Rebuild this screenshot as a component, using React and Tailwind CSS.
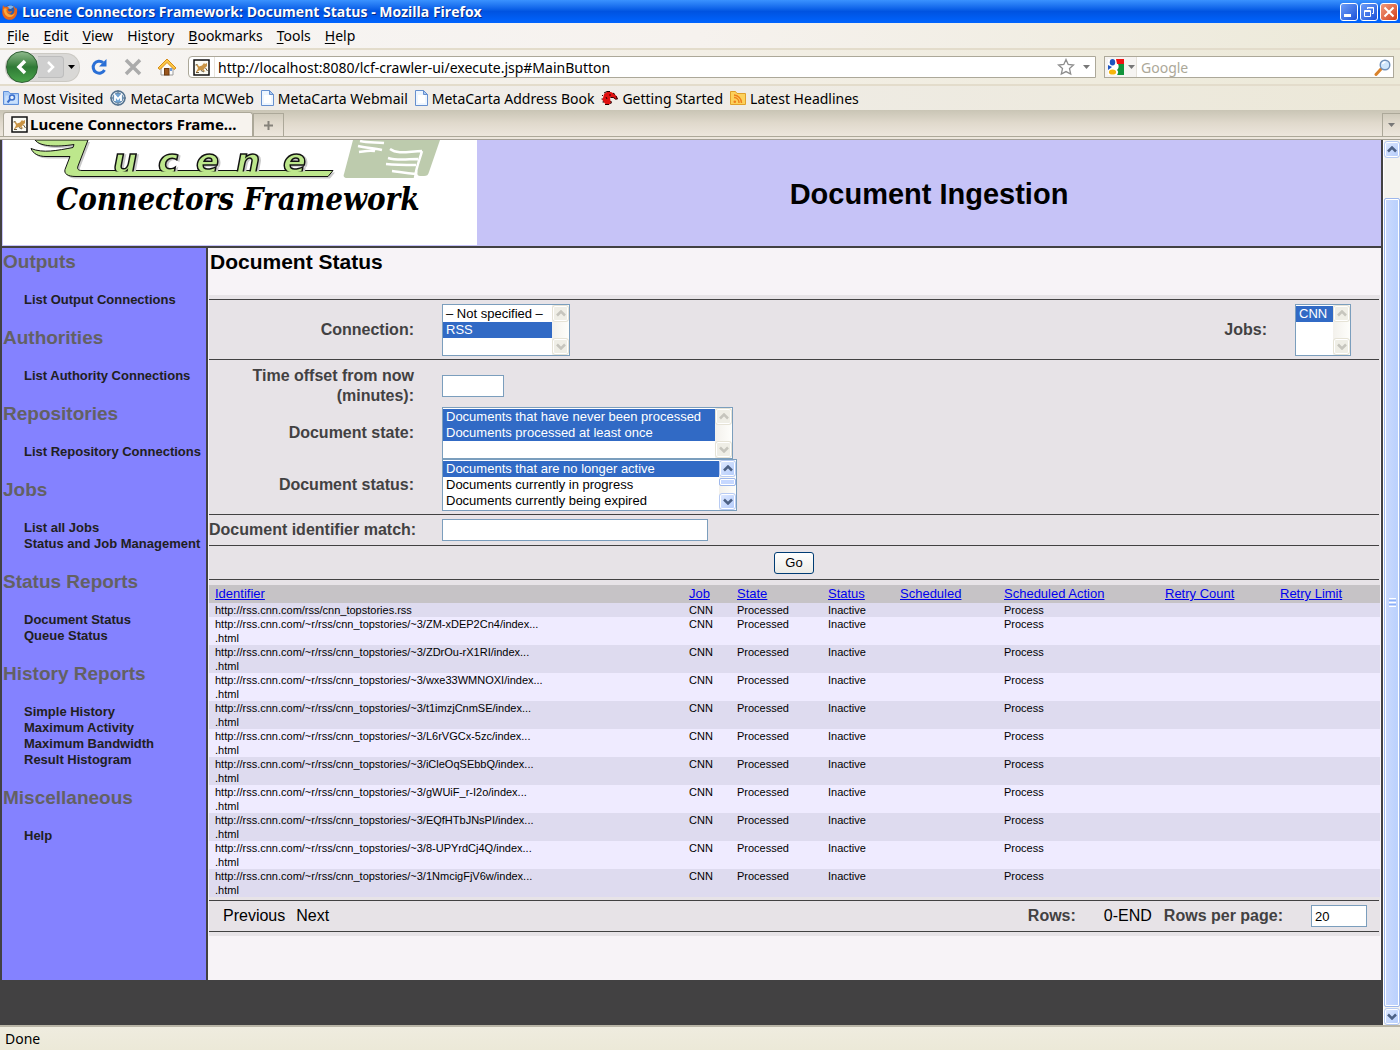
import React from "react";

const UI = "font-['Noto_Sans','DejaVu_Sans',sans-serif]";

/* ---------- icons ---------- */

function FirefoxIcon() {
  return (
    <svg width="16" height="16" viewBox="0 0 16 16" aria-hidden="true">
      <circle cx="8" cy="7.500" r="6.500" fill="#2b5fae" />
      <path d="M5 3c2-2 5-2 7 0-1 0-2 1-3 2-2 0-3-1-4-2z" fill="#7db4ee" />
      <path d="M1 1c.6 1 1.200 2 2 2C5 2.500 6.500 3 7.500 4.500 5.500 5 5.500 6 6.500 7c1 .8 2.500.5 3.500 0 0 2-2 3-4 2.500C8 12 12 11 12.500 6c-.3-1.500-.5-2.500-1.500-4 1.500.5 2.500 1.500 3 3l.5-1.500C16.500 8 14 15.800 8 15.800 3 15.800 0 12 .3 7 .5 5 .5 3 1 1z" fill="#e8661a" />
      <path d="M1.500 5c1-1 2.500-1 3.500 0-1.500 2 0 5 3 5.500 2 1 4 0 5-2-.5 3-3 5-6 4.500C4 12.500 2 10 1.500 5z" fill="#f9a93b" />
    </svg>
  );
}

function CatIcon() {
  return (
    <svg width="17" height="17" viewBox="0 0 17 17" aria-hidden="true">
      <rect x="1" y="1" width="15" height="15" fill="#fbfbf4" stroke="#111" strokeWidth="1.500" />
      <path d="M3 5.500L5 6l1 1.500 3-1L11 4l1 1 2-1v3l-2 2-1.500 1.500 2 2H11L9 11l-3 .5-2 1.500H3l1.500-2.500L5 9z" fill="#c99445" />
      <path d="M2.500 6l2-.5M3 13.500h3M8 11.500l3 1.500M12.500 9l2 3" stroke="#6a5a3c" fill="none" />
    </svg>
  );
}

function ReloadIcon() {
  return (
    <svg width="18" height="18" viewBox="0 0 18 18" aria-hidden="true">
      <path d="M13 4.500A6 6 0 1 0 14.500 12" fill="none" stroke="#2a6fd6" strokeWidth="3" />
      <path d="M16.500 1v7.500H9z" fill="#2a6fd6" />
    </svg>
  );
}

function StopIcon() {
  return (
    <svg width="18" height="18" viewBox="0 0 18 18" aria-hidden="true">
      <path d="M2 2l14 14M16 2L2 16" stroke="#ababab" strokeWidth="3.500" />
    </svg>
  );
}

function HomeIcon() {
  return (
    <svg width="20" height="18" viewBox="0 0 20 18" aria-hidden="true">
      <path d="M4 9l6-6 6 6v8H4z" fill="#fbfbfb" stroke="#9a9a9a" />
      <path d="M10 1L1 10l2 1.500 7-7 7 7L19 10z" fill="#fcc845" stroke="#d58b16" strokeLinejoin="round" />
      <rect x="7.500" y="10.500" width="4.500" height="6.500" fill="#99561e" stroke="#6d3a10" />
      <rect x="13" y="10" width="2" height="3" fill="#6f9bdc" />
    </svg>
  );
}

function MostVisitedIcon() {
  return (
    <svg width="16" height="14" viewBox="0 0 16 14" aria-hidden="true">
      <path d="M.5 13.500V.5h5l1.500 2h8.500v11z" fill="#a9cbf7" stroke="#5f8fd8" />
      <path d="M1.500 12.500l1-8h12v8z" fill="#c9e0fc" />
      <circle cx="9" cy="6.500" r="2.500" fill="#e6f1ff" stroke="#3b6ecb" strokeWidth="1.500" />
      <path d="M7 8.500L4.500 11.500" stroke="#3b6ecb" strokeWidth="2" />
    </svg>
  );
}

function MetaCartaIcon() {
  return (
    <svg width="16" height="16" viewBox="0 0 16 16" aria-hidden="true">
      <circle cx="8" cy="8" r="7" fill="#dce8f2" stroke="#54728f" strokeWidth="1.500" />
      <circle cx="8" cy="8" r="5" fill="#6fa3d4" stroke="#54728f" strokeWidth=".8" />
      <path d="M5 11V5.500l3 3.500 3-3.500V11" fill="none" stroke="#fff" strokeWidth="1.800" />
      <path d="M8 0v3M0 8h3M13 8h3M8 13v3" stroke="#54728f" />
    </svg>
  );
}

function PageIcon() {
  return (
    <svg width="13" height="16" viewBox="0 0 13 16" aria-hidden="true">
      <path d="M.5.5h8l4 4v11H.5z" fill="#eef6ff" stroke="#6690cf" />
      <path d="M3 5h7v8H3z" fill="#fff" />
      <path d="M8.500.5v4h4z" fill="#a9c8f2" stroke="#6690cf" />
    </svg>
  );
}

function DinoIcon() {
  return (
    <svg width="17" height="15" viewBox="0 0 17 15" aria-hidden="true">
      <path d="M3 3l3-2h4l3 1.500 3 3 .5 2.500-2 .5-3-2H9l.5 3.500 1 1-2 2.500H5L2.500 11 1 8l1-1z" fill="#e01010" />
      <path d="M3 2l3-1.500h3M1 5l1-1M.5 8h1M1.500 11h1.500M4 13.500h4M9.500 10l1 1-1 2M12 2l2 1.500M15 5l1.500 3h-2l-2-1.500H9.500M8 4h2M5 6l1 2" stroke="#240202" strokeWidth="1" fill="none" />
    </svg>
  );
}

function FeedFolderIcon() {
  return (
    <svg width="16" height="14" viewBox="0 0 16 14" aria-hidden="true">
      <path d="M.5 13.500V.5h5l1.500 2h8.500v11z" fill="#fcd15b" stroke="#e0a02a" />
      <path d="M4 6.500a5 5 0 0 1 5 5.500M4 4A8 8 0 0 1 11.500 12" fill="none" stroke="#ee7f1c" strokeWidth="1.400" />
      <circle cx="4.800" cy="10.800" r="1.300" fill="#ee7f1c" />
    </svg>
  );
}

function StarIcon() {
  return (
    <svg width="18" height="18" viewBox="0 0 18 18" aria-hidden="true">
      <path d="M9 1.500l2.200 4.900 5.300.6-4 3.600 1.200 5.400L9 13.600 4.300 16l1.200-5.400-4-3.600 5.300-.6z" fill="#fff" stroke="#8d8d8d" strokeWidth="1.300" />
    </svg>
  );
}

function GoogleIcon() {
  return (
    <svg width="16" height="16" viewBox="0 0 16 16" aria-hidden="true">
      <rect width="16" height="16" fill="#fff" />
      <path d="M8 0h8v5H9z" fill="#f01313" />
      <path d="M10 5h6v11H9c2-3 1-4 0-5 2-2 2-4 1-6z" fill="#11933b" />
      <path d="M0 6l4 2-4 3z" fill="#1d53c0" />
      <ellipse cx="4.500" cy="3.300" rx="2.700" ry="3.200" fill="#1d53c0" />
      <ellipse cx="4.500" cy="13" rx="3.600" ry="2.600" fill="#f5b50b" />
    </svg>
  );
}

function MagnifierIcon() {
  return (
    <svg width="17" height="17" viewBox="0 0 17 17" aria-hidden="true">
      <path d="M7 10L2 15.500" stroke="#d9822b" strokeWidth="3" strokeLinecap="round" />
      <circle cx="11" cy="6" r="4.800" fill="#cfe6fb" stroke="#6e8fb8" strokeWidth="1.400" />
      <path d="M8.500 5a3 3 0 0 1 3-2" stroke="#fff" fill="none" strokeWidth="1.400" />
    </svg>
  );
}

function DownTriangle({ className }) {
  return (
    <svg width="7" height="4" viewBox="0 0 7 4" className={className} aria-hidden="true">
      <path d="M0 0h7L3.500 4z" fill="currentColor" />
    </svg>
  );
}

function Chevron({ up }) {
  return (
    <svg width="10" height="7" viewBox="0 0 10 7" aria-hidden="true">
      <path d={up ? "M1 5.500l4-4 4 4" : "M1 1.500l4 4 4-4"} fill="none" stroke="currentColor" strokeWidth="2.500" />
    </svg>
  );
}

/* ---------- scroll bars ---------- */

function ScrollButton({ up, active, label }) {
  return (
    <button
      type="button"
      aria-label={label}
      className={
        "flex h-[17px] w-full shrink-0 items-center justify-center rounded-[3px] border " +
        (active
          ? "border-[#b8cbf3] bg-linear-to-br from-[#dfe9ff] to-[#b3cbfb] text-[#4d6185] shadow-[inset_0_0_0_1px_white]"
          : "border-[#e6e3d6] bg-[#efeee6] text-[#c6c5bd] shadow-[inset_0_0_0_1px_white]")
      }
    >
      <Chevron up={up} />
    </button>
  );
}

function ListBox({ id, width, options, selected, active }) {
  return (
    <div className={"flex h-[52px] shrink-0 border border-[#7b9ebd] bg-white " + width}>
      <select
        id={id}
        multiple
        size={3}
        defaultValue={selected}
        className="h-[50px] min-w-0 flex-1 overflow-hidden bg-white pt-px text-[13px] leading-4 text-black outline-none [scrollbar-width:none]"
      >
        {options.map((o) => (
          <option key={o} value={o} className="h-4 min-h-4 py-0 pr-0 pl-[3px] leading-4 checked:bg-[#316ac5] checked:text-white">
            {o}
          </option>
        ))}
      </select>
      <div className="flex w-[17px] shrink-0 flex-col bg-linear-to-r from-[#f3f1ec] to-[#fefefb]">
        <ScrollButton up active={active} label="Scroll up" />
        <div className="flex-1">
          {active && <div className="mt-px h-2 rounded-[2px] border border-[#9db7ec] bg-[#c6d8ff] shadow-[inset_0_0_0_1px_white]" />}
        </div>
        <ScrollButton active={active} label="Scroll down" />
      </div>
    </div>
  );
}

/* ---------- browser chrome ---------- */

function TitleBar() {
  return (
    <header className="flex h-[23px] items-center bg-linear-to-b from-[#3a92ff] via-[#0053e1] to-[#0064ff] px-[2px]">
      <FirefoxIcon />
      <h1 className="ml-1 flex-1 truncate font-['Open_Sans',sans-serif] text-[14px] leading-[22px] font-bold text-white [text-shadow:1px_1px_0_#0a2a86]">
        Lucene Connectors Framework: Document Status - Mozilla Firefox
      </h1>
      <div className="flex gap-[2px]">
        <button type="button" aria-label="Minimize" className="flex size-[18px] items-end rounded-[3px] border border-white bg-linear-to-br from-[#6d9cf7] to-[#1c50d8] p-[3px]">
          <span className="h-[3px] w-[7px] bg-white" />
        </button>
        <button type="button" aria-label="Restore" className="flex size-[18px] items-center justify-center rounded-[3px] border border-white bg-linear-to-br from-[#6d9cf7] to-[#1c50d8]">
          <svg width="12" height="12" viewBox="0 0 12 12" fill="none" stroke="#fff" aria-hidden="true">
            <path d="M4.500 3V1.500h6v6H9M4 2h7" />
            <path d="M1.500 4.500h6v6h-6zM1 5.500h7" />
          </svg>
        </button>
        <button type="button" aria-label="Close" className="flex size-[18px] items-center justify-center rounded-[3px] border border-white bg-linear-to-br from-[#f09a7c] to-[#d13a12]">
          <svg width="12" height="12" viewBox="0 0 12 12" aria-hidden="true">
            <path d="M1.500 1.500l9 9M10.500 1.500l-9 9" stroke="#fff" strokeWidth="2" />
          </svg>
        </button>
      </div>
    </header>
  );
}

const MENUS = [
  ["", "F", "ile"],
  ["", "E", "dit"],
  ["", "V", "iew"],
  ["Hi", "s", "tory"],
  ["", "B", "ookmarks"],
  ["", "T", "ools"],
  ["", "H", "elp"],
];

function MenuBar() {
  return (
    <nav aria-label="Menu" className="flex h-[27px] items-center gap-[14px] border-b-2 border-[#e3dccb] bg-linear-to-r from-[#f7f5f4] via-[#f6f2ee] to-[#ece9d8] px-[7px] text-[14px]">
      {MENUS.map(([a, b, c]) => (
        <button type="button" key={a + b + c}>
          {a}
          <span className="underline underline-offset-2">{b}</span>
          {c}
        </button>
      ))}
    </nav>
  );
}

function NavBar() {
  return (
    <div className="flex h-[36px] items-center border-b-2 border-[#e3dccb] bg-linear-to-r from-[#f7f5f4] via-[#f3efe6] to-[#ece9d8] px-[6px]">
      <div className="flex h-[27px] items-center rounded-[13px] bg-[#d9d8d6] shadow-[0_0_0_1px_#cbc9c3]">
        <button type="button" aria-label="Back" className="flex size-[32px] items-center justify-center rounded-full border border-[#2f5f33] bg-linear-to-b from-[#8cb98b] via-[#2e7a35] to-[#49a34a]">
          <svg width="14" height="16" viewBox="0 0 14 16" aria-hidden="true">
            <path d="M10 2L4 8l6 6" fill="none" stroke="#fff" strokeWidth="3.500" />
          </svg>
        </button>
        <button type="button" aria-label="Forward" className="flex h-[22px] w-[26px] items-center justify-center rounded-r-[4px] border border-l-0 border-[#bdbdbd] bg-[#cfcfcf]">
          <svg width="12" height="12" viewBox="0 0 12 12" aria-hidden="true">
            <path d="M3 1l5 5-5 5" fill="none" stroke="#fff" strokeWidth="2.500" />
          </svg>
        </button>
        <button type="button" aria-label="Recent pages" className="px-[4px] text-black">
          <DownTriangle />
        </button>
      </div>
      <button type="button" aria-label="Reload" className="ml-[11px]"><ReloadIcon /></button>
      <button type="button" aria-label="Stop" className="ml-4"><StopIcon /></button>
      <button type="button" aria-label="Home" className="ml-[15px]"><HomeIcon /></button>
      <div className="ml-[11px] flex h-[22px] flex-1 items-center rounded-l-[4px] border border-[#aca899] bg-white">
        <span className="flex h-full w-[26px] items-center justify-center border-r border-[#e6e2da]"><CatIcon /></span>
        <input
          aria-label="Address"
          type="text"
          defaultValue="http://localhost:8080/lcf-crawler-ui/execute.jsp#MainButton"
          className="min-w-0 flex-1 bg-transparent pl-[3px] text-[14px] outline-none"
        />
        <button type="button" aria-label="Bookmark this page"><StarIcon /></button>
        <button type="button" aria-label="Show history" className="ml-2 mr-[5px] text-[#777]"><DownTriangle /></button>
      </div>
      <div className="ml-2 flex h-[22px] w-[290px] items-center border border-[#aca899] bg-white pr-[2px]">
        <button type="button" aria-label="Choose search engine" className="flex h-full w-[32px] items-center gap-1 border-r border-[#e6e2da] bg-[#f6f4f2] pl-[3px] text-[#777]">
          <GoogleIcon />
          <DownTriangle />
        </button>
        <input aria-label="Search" type="text" placeholder="Google" className="min-w-0 flex-1 bg-transparent pl-1 text-[14px] outline-none placeholder:text-[#aca899]" />
        <button type="button" aria-label="Search the web"><MagnifierIcon /></button>
      </div>
    </div>
  );
}

const BOOKMARKS = [
  ["Most Visited", MostVisitedIcon],
  ["MetaCarta MCWeb", MetaCartaIcon],
  ["MetaCarta Webmail", PageIcon],
  ["MetaCarta Address Book", PageIcon],
  ["Getting Started", DinoIcon],
  ["Latest Headlines", FeedFolderIcon],
];

function BookmarkBar() {
  return (
    <nav aria-label="Bookmarks" className="flex h-[24px] items-center gap-[7px] bg-linear-to-r from-[#f1efee] via-[#efece6] to-[#ece8d8] pl-[3px] text-[14px]">
      {BOOKMARKS.map(([text, Icon]) => (
        <a href="#bookmark" key={text} className="flex items-center gap-1 whitespace-nowrap">
          <Icon />
          {text}
        </a>
      ))}
    </nav>
  );
}

function TabBar() {
  return (
    <div className="flex h-[30px] flex-col border-b border-[#a5a196] bg-[#ece6dc]">
      <div className="flex h-[27px] items-end border-b border-[#aca899] bg-linear-to-b from-[#c9c5b5] via-[#e0d9cc] to-[#ece6dc] pl-[3px]">
        <button type="button" className="flex h-[24px] w-[250px] items-center gap-[2px] rounded-t-[3px] border border-b-0 border-[#aca899] bg-[#f7f3ee] pl-[7px] text-[15px] font-bold whitespace-nowrap">
          <CatIcon />
          Lucene Connectors Frame...
        </button>
        <button type="button" aria-label="Open a new tab" className="flex h-[23px] w-[31px] items-center justify-center border border-b-0 border-[#aca899] text-[#85827a]">
          <svg width="9" height="9" viewBox="0 0 9 9" aria-hidden="true">
            <path d="M4.500 0v9M0 4.500h9" stroke="currentColor" strokeWidth="2" />
          </svg>
        </button>
        <button type="button" aria-label="List all tabs" className="ml-auto flex h-[23px] w-[18px] items-center justify-center border border-r-0 border-b-0 border-[#aca899] text-[#777]">
          <DownTriangle />
        </button>
      </div>
    </div>
  );
}

/* ---------- page ---------- */

const SWOOSH =
  "M35 0H76l12 0L78 26c-1 3 0 4.500 4 4.500h251l-5 6H76c-9 0-12-3-11-7l5-13H46c-8 0-13-3-15-8 12 5 26 2 42-1l1-3C58 7 40 7 35 0z";

function Logo() {
  return (
    <svg width="440" height="44" viewBox="3 0 440 44" role="img" aria-label="Lucene">
      <path d={SWOOSH} fill="#c9c9c9" transform="translate(2 2)" />
      <path d={SWOOSH} fill="#bde78c" stroke="#111" />
      <text
        x="113 158 196 236 283"
        y="33"
        fontFamily="DejaVu Sans"
        fontStyle="italic"
        fontWeight="bold"
        fontSize="34"
        fill="#bde78c"
        stroke="#111"
        strokeWidth="1.500"
        className="drop-shadow-[2px_1px_0_#c9c9c9]"
      >
        ucene
      </text>
      <path d="M83 31.500h247l-4 4.500H80z" fill="#bde78c" />
      <path d="M353 0h87l-11 32c-1 3-2 4-5 4h-4c-3 0-3-3-2-6l-4 8h-67c-3 0-4-2-3-4z" fill="#bdcbad" />
      <path
        d="M360 1c8 2 16 1 24 2M358 6c8 2 16 2 24 4M359 12c7-1 10-2 16-1M390 9c8 6 20 2 32 2M388 18c10 3 20 1 30 1M386 24c10 1 20 1 30 1M392 31c8 1 14 2 24 3M422 11c-2 8-6 16-7 27"
        fill="none"
        stroke="#fff"
        strokeWidth="2.500"
      />
    </svg>
  );
}

const NAV = [
  ["Outputs", ["List Output Connections"]],
  ["Authorities", ["List Authority Connections"]],
  ["Repositories", ["List Repository Connections"]],
  ["Jobs", ["List all Jobs", "Status and Job Management"]],
  ["Status Reports", ["Document Status", "Queue Status"]],
  ["History Reports", ["Simple History", "Maximum Activity", "Maximum Bandwidth", "Result Histogram"]],
  ["Miscellaneous", ["Help"]],
];

function Sidebar() {
  return (
    <nav aria-label="Sections" className="flex w-[206px] shrink-0 flex-col gap-[19px] border-r-2 border-[#424142] bg-[#8482ff] pt-[3px]">
      {NAV.map(([title, items]) => (
        <section key={title} className="flex flex-col gap-[19px] pl-px">
          <h3 className="text-[19px] leading-[22px] font-bold text-[#636163]">{title}</h3>
          <ul className="pl-[21px] text-[13px] leading-4 font-bold text-[#212021]">
            {items.map((item) => (
              <li key={item}>
                <a href="#section" className="whitespace-nowrap">{item}</a>
              </li>
            ))}
          </ul>
        </section>
      ))}
    </nav>
  );
}

const COLUMNS = [
  ["Identifier", "w-auto"],
  ["Job", "w-[48px]"],
  ["State", "w-[91px]"],
  ["Status", "w-[72px]"],
  ["Scheduled", "w-[104px]"],
  ["Scheduled Action", "w-[161px]"],
  ["Retry Count", "w-[115px]"],
  ["Retry Limit", "w-[106px]"],
];

const BASE = "http://rss.cnn.com/~r/rss/cnn_topstories/~3/";
const ROWS = [
  "ZM-xDEP2Cn4", "ZDrOu-rX1RI", "wxe33WMNOXI", "t1imzjCnmSE", "L6rVGCx-5zc",
  "iCleOqSEbbQ", "gWUiF_r-I2o", "EQfHTbJNsPI", "8-UPYrdCj4Q", "1NmcigFjV6w",
];
const IDENTIFIERS = [["http://rss.cnn.com/rss/cnn_topstories.rss"]].concat(
  ROWS.map((r) => [BASE + r + "/index...", ".html"])
);

function ResultTable() {
  return (
    <table className="w-full table-fixed border-collapse text-left">
      <thead>
        <tr className="h-[18px] bg-[#c6c3c6]">
          {COLUMNS.map(([name, width]) => (
            <th key={name} scope="col" className={"p-0 pl-[6px] text-[13px] leading-[18px] font-normal " + width}>
              <a href="#sort" className="text-[#0000ee] underline">{name}</a>
            </th>
          ))}
        </tr>
      </thead>
      <tbody className="text-[11px] leading-[14px]">
        {IDENTIFIERS.map((lines) => (
          <tr key={lines[0]} className="align-top odd:bg-[#dedbef] even:bg-[#efebff]">
            <td className="p-0 pl-[6px]">
              {lines.map((line) => (
                <div key={line}>{line}</div>
              ))}
            </td>
            <td className="p-0 pl-[6px]">CNN</td>
            <td className="p-0 pl-[6px]">Processed</td>
            <td className="p-0 pl-[6px]">Inactive</td>
            <td />
            <td className="p-0 pl-[6px]">Process</td>
            <td />
            <td />
          </tr>
        ))}
      </tbody>
    </table>
  );
}

const LABEL = "w-[205px] shrink-0 text-right leading-5 font-bold text-[#424142]";
const FIELD = "h-[22px] border border-[#7b9ebd] bg-white px-[3px] text-[13px] outline-none";

function StatusForm() {
  return (
    <form onSubmit={(e) => e.preventDefault()} className="mx-px bg-[#e7e3e7] py-1 text-[16px]">
      <div className="mr-px flex items-center gap-7 border-y border-[#424142] pt-1 pr-7 pb-[3px]">
        <label htmlFor="connection" className={LABEL}>Connection:</label>
        <ListBox id="connection" width="w-[128px]" options={["– Not specified –", "RSS"]} selected={["RSS"]} />
        <label htmlFor="jobs" className="ml-auto leading-5 font-bold text-[#424142]">Jobs:</label>
        <ListBox id="jobs" width="w-[56px]" options={["CNN"]} selected={["CNN"]} />
      </div>
      <div className="mr-px border-b border-[#424142] pt-[6px] pb-[3px]">
        <div className="flex items-end gap-7 pb-px">
          <label htmlFor="offset" className={LABEL}>Time offset from now (minutes):</label>
          <input id="offset" type="text" className={FIELD + " mb-[9px] w-[62px]"} />
        </div>
        <div className="flex items-center gap-7">
          <label htmlFor="state" className={LABEL}>Document state:</label>
          <ListBox
            id="state"
            width="w-[291px]"
            options={["Documents that have never been processed", "Documents processed at least once"]}
            selected={["Documents that have never been processed", "Documents processed at least once"]}
          />
        </div>
        <div className="flex items-center gap-7">
          <label htmlFor="status" className={LABEL}>Document status:</label>
          <ListBox
            id="status"
            width="w-[295px]"
            active
            options={["Documents that are no longer active", "Documents currently in progress", "Documents currently being expired"]}
            selected={["Documents that are no longer active"]}
          />
        </div>
      </div>
      <div className="mr-px flex items-center gap-7 border-b border-[#424142] py-1">
        <label htmlFor="match" className={LABEL + " whitespace-nowrap"}>Document identifier match:</label>
        <input id="match" type="text" className={FIELD + " w-[266px]"} />
      </div>
      <div className="mr-px flex justify-center border-b border-[#424142] pt-[6px] pb-[5px]">
        <button type="submit" className="h-[22px] w-[40px] rounded-[3px] border border-[#003c74] bg-linear-to-b from-white to-[#ecebe6] text-[13px] leading-5">Go</button>
      </div>
      <div className="pt-[5px] pb-[3px]">
        <ResultTable />
      </div>
      <div className="mr-px flex items-center border-y border-[#424142] py-1 pr-3 pl-[14px] leading-5">
        <a href="#previous">Previous</a>
        <a href="#next" className="ml-[11px]">Next</a>
        <span className="ml-auto font-bold text-[#424142]">Rows:</span>
        <span className="ml-7">0-END</span>
        <label htmlFor="perpage" className="ml-3 font-bold text-[#424142]">Rows per page:</label>
        <input id="perpage" type="text" defaultValue="20" className={FIELD + " ml-7 w-[56px]"} />
      </div>
    </form>
  );
}

function PageScrollBar() {
  return (
    <div className="flex w-[17px] shrink-0 flex-col border-l border-white bg-[#f4f3ee] pt-px">
      <ScrollButton up active label="Page up" />
      <div className="flex flex-1 flex-col pt-10 pb-px">
        <div className="flex flex-1 flex-col items-center justify-center rounded-[2px] border border-[#9db7ec] bg-linear-to-r from-[#cbdafe] to-[#b9d0fd] shadow-[inset_0_0_0_1px_white]">
          <div className="flex w-[7px] flex-col gap-px">
            <span className="h-px bg-white" />
            <span className="h-px bg-[#8cb0f8]" />
            <span className="h-px bg-white" />
            <span className="h-px bg-[#8cb0f8]" />
            <span className="h-px bg-white" />
          </div>
        </div>
      </div>
      <ScrollButton active label="Page down" />
    </div>
  );
}

export default function App() {
  return (
    <div className={"flex min-h-screen flex-col bg-[#ece9d8] text-black " + UI}>
      <TitleBar />
      <MenuBar />
      <NavBar />
      <BookmarkBar />
      <TabBar />
      <div className="flex flex-1">
        <div className="min-w-0 flex-1 bg-[#424142] px-[2px] font-['Liberation_Sans',Arial,sans-serif]">
          <div className="flex bg-[#c6c3f7] pb-px">
            <div className="ml-px flex h-[105px] w-[474px] shrink-0 flex-col bg-white">
              <Logo />
              <div className="pl-[53px] font-['DejaVu_Serif_Condensed','DejaVu_Serif',serif] text-[31px] leading-[31px] font-bold whitespace-nowrap italic">
                Connectors Framework
              </div>
            </div>
            <div className="flex flex-1 items-center justify-center pt-1">
              <h1 className="text-[29px] font-bold">Document Ingestion</h1>
            </div>
          </div>
          <div className="mt-[2px] flex">
            <Sidebar />
            <main className="min-w-0 flex-1 bg-[#f7f3f7] pb-11">
              <h2 className="mb-[21px] pt-[2px] pl-[2px] text-[21px] leading-6 font-bold">Document Status</h2>
              <StatusForm />
            </main>
          </div>
        </div>
        <PageScrollBar />
      </div>
      <footer className="flex h-[25px] items-center border-t-2 border-[#b9b5a6] bg-linear-to-b from-[#efecdf] to-[#ece9d8] pl-[5px] text-[14px]">Done</footer>
    </div>
  );
}
